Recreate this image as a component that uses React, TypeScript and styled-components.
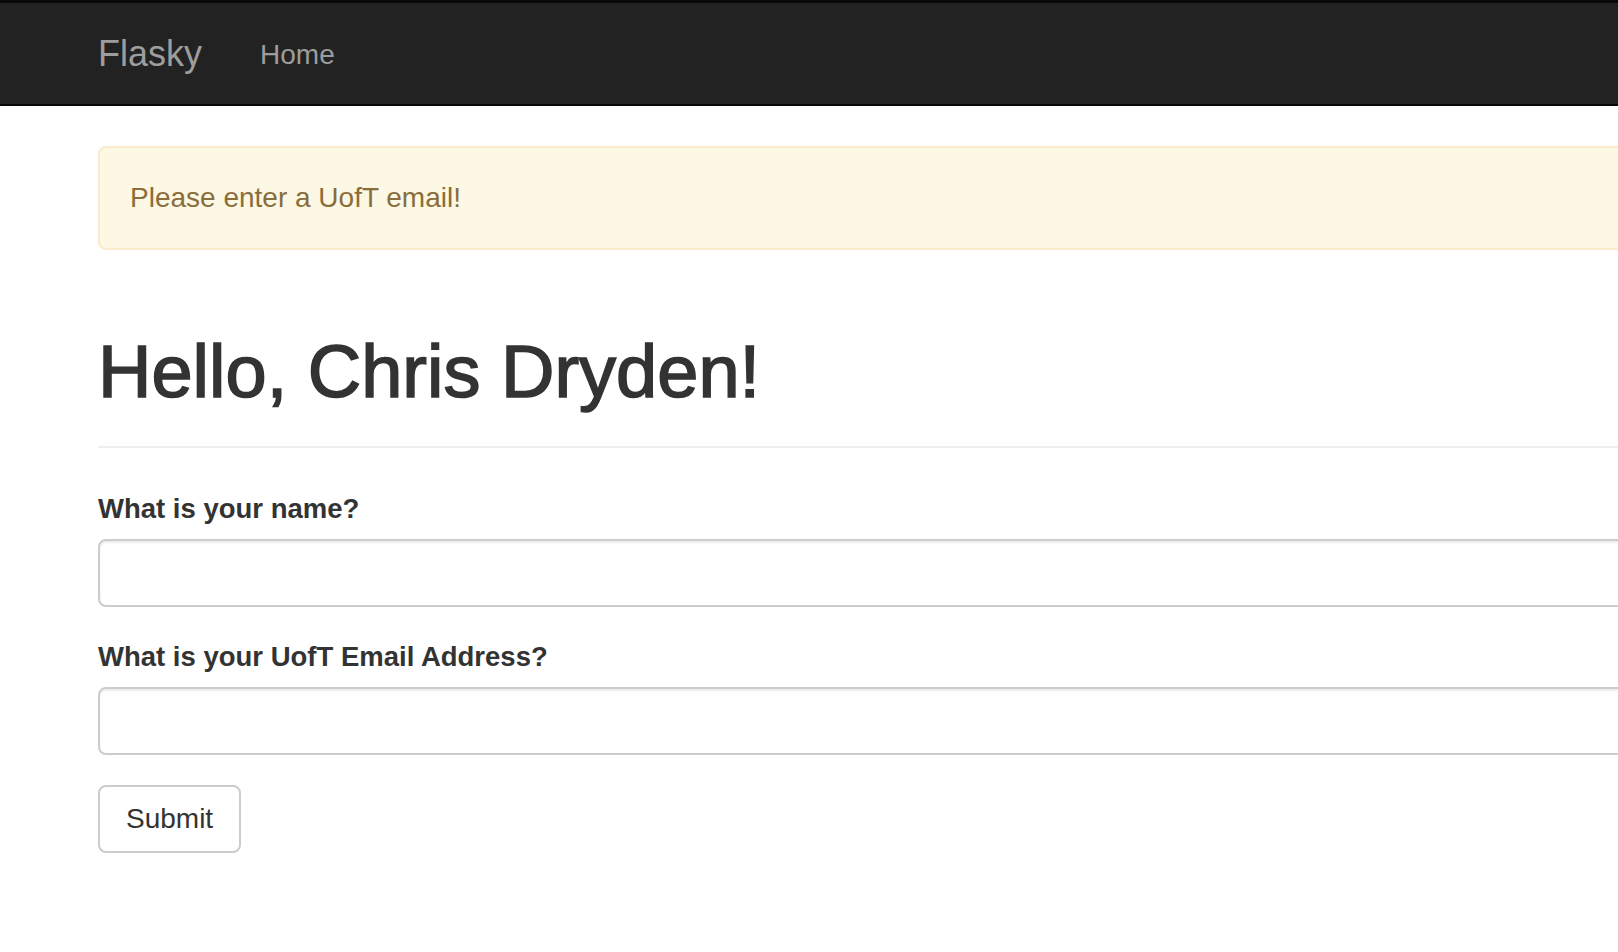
import React from "react";
import styled, { createGlobalStyle } from "styled-components";

const GlobalStyle = createGlobalStyle`
  html, body {
    margin: 0;
    padding: 0;
    overflow: hidden;
    background: #fff;
  }
  body {
    font-family: "Liberation Sans", Arial, Helvetica, sans-serif;
    font-size: 28px;
    line-height: 40px;
    color: #333;
  }
  * { box-sizing: border-box; }
`;

const Navbar = styled.nav`
  width: 100%;
  height: 106px;
  background: #222;
  border-top: 3px solid #080808;
  border-bottom: 2px solid #080808;
  display: flex;
  align-items: center;
  padding-left: 98px;
`;

const Brand = styled.a`
  font-size: 36px;
  line-height: 40px;
  color: #9d9d9d;
  text-decoration: none;
  margin-right: 58px;
`;

const NavLink = styled.a`
  font-size: 28px;
  line-height: 40px;
  color: #9d9d9d;
  text-decoration: none;
  margin-top: 2px;
`;

const Container = styled.main`
  width: 2400px;
  padding-left: 98px;
  display: flex;
  flex-direction: column;
`;

const Alert = styled.div`
  margin-top: 40px;
  padding: 30px 30px;
  background: #fcf8e3;
  border: 2px solid #faebcc;
  border-radius: 8px;
  color: #8a6d3b;
  font-size: 28px;
  line-height: 40px;
`;

const PageHeader = styled.div`
  margin-top: 81px;
  padding-bottom: 34px;
  border-bottom: 2px solid #eee;
  margin-bottom: 41px;
`;

const Title = styled.h1`
  margin: 0;
  font-size: 74px;
  line-height: 81px;
  font-weight: 400;
  color: #333;
  -webkit-text-stroke: 1.6px #333;
`;

const Form = styled.form`
  display: flex;
  flex-direction: column;
`;

const FormGroup = styled.div`
  display: flex;
  flex-direction: column;
  margin-bottom: 30px;
`;

const Label = styled.label`
  font-weight: 700;
  font-size: 27.5px;
  line-height: 40px;
  margin-bottom: 10px;
  color: #333;
`;

const Input = styled.input`
  height: 68px;
  width: 100%;
  border: 2px solid #ccc;
  border-radius: 8px;
  box-shadow: inset 0 2px 2px rgba(0, 0, 0, 0.075);
  padding: 12px 24px;
  font-family: inherit;
  font-size: 28px;
  color: #555;
  background: #fff;
  outline: none;
`;

const Button = styled.button`
  align-self: flex-start;
  height: 68px;
  padding: 12px 26px;
  border: 2px solid #ccc;
  border-radius: 8px;
  background: #fff;
  color: #333;
  font-family: inherit;
  font-size: 28px;
  line-height: 40px;
  cursor: pointer;
`;

export default function App() {
  return (
    <>
      <GlobalStyle />
      <Navbar>
        <Brand href="#">Flasky</Brand>
        <NavLink href="#">Home</NavLink>
      </Navbar>
      <Container>
        <Alert>Please enter a UofT email!</Alert>
        <PageHeader>
          <Title>Hello, Chris Dryden!</Title>
        </PageHeader>
        <Form onSubmit={(e) => e.preventDefault()}>
          <FormGroup>
            <Label htmlFor="name">What is your name?</Label>
            <Input id="name" type="text" />
          </FormGroup>
          <FormGroup>
            <Label htmlFor="email">What is your UofT Email Address?</Label>
            <Input id="email" type="text" />
          </FormGroup>
          <Button type="submit">Submit</Button>
        </Form>
      </Container>
    </>
  );
}
